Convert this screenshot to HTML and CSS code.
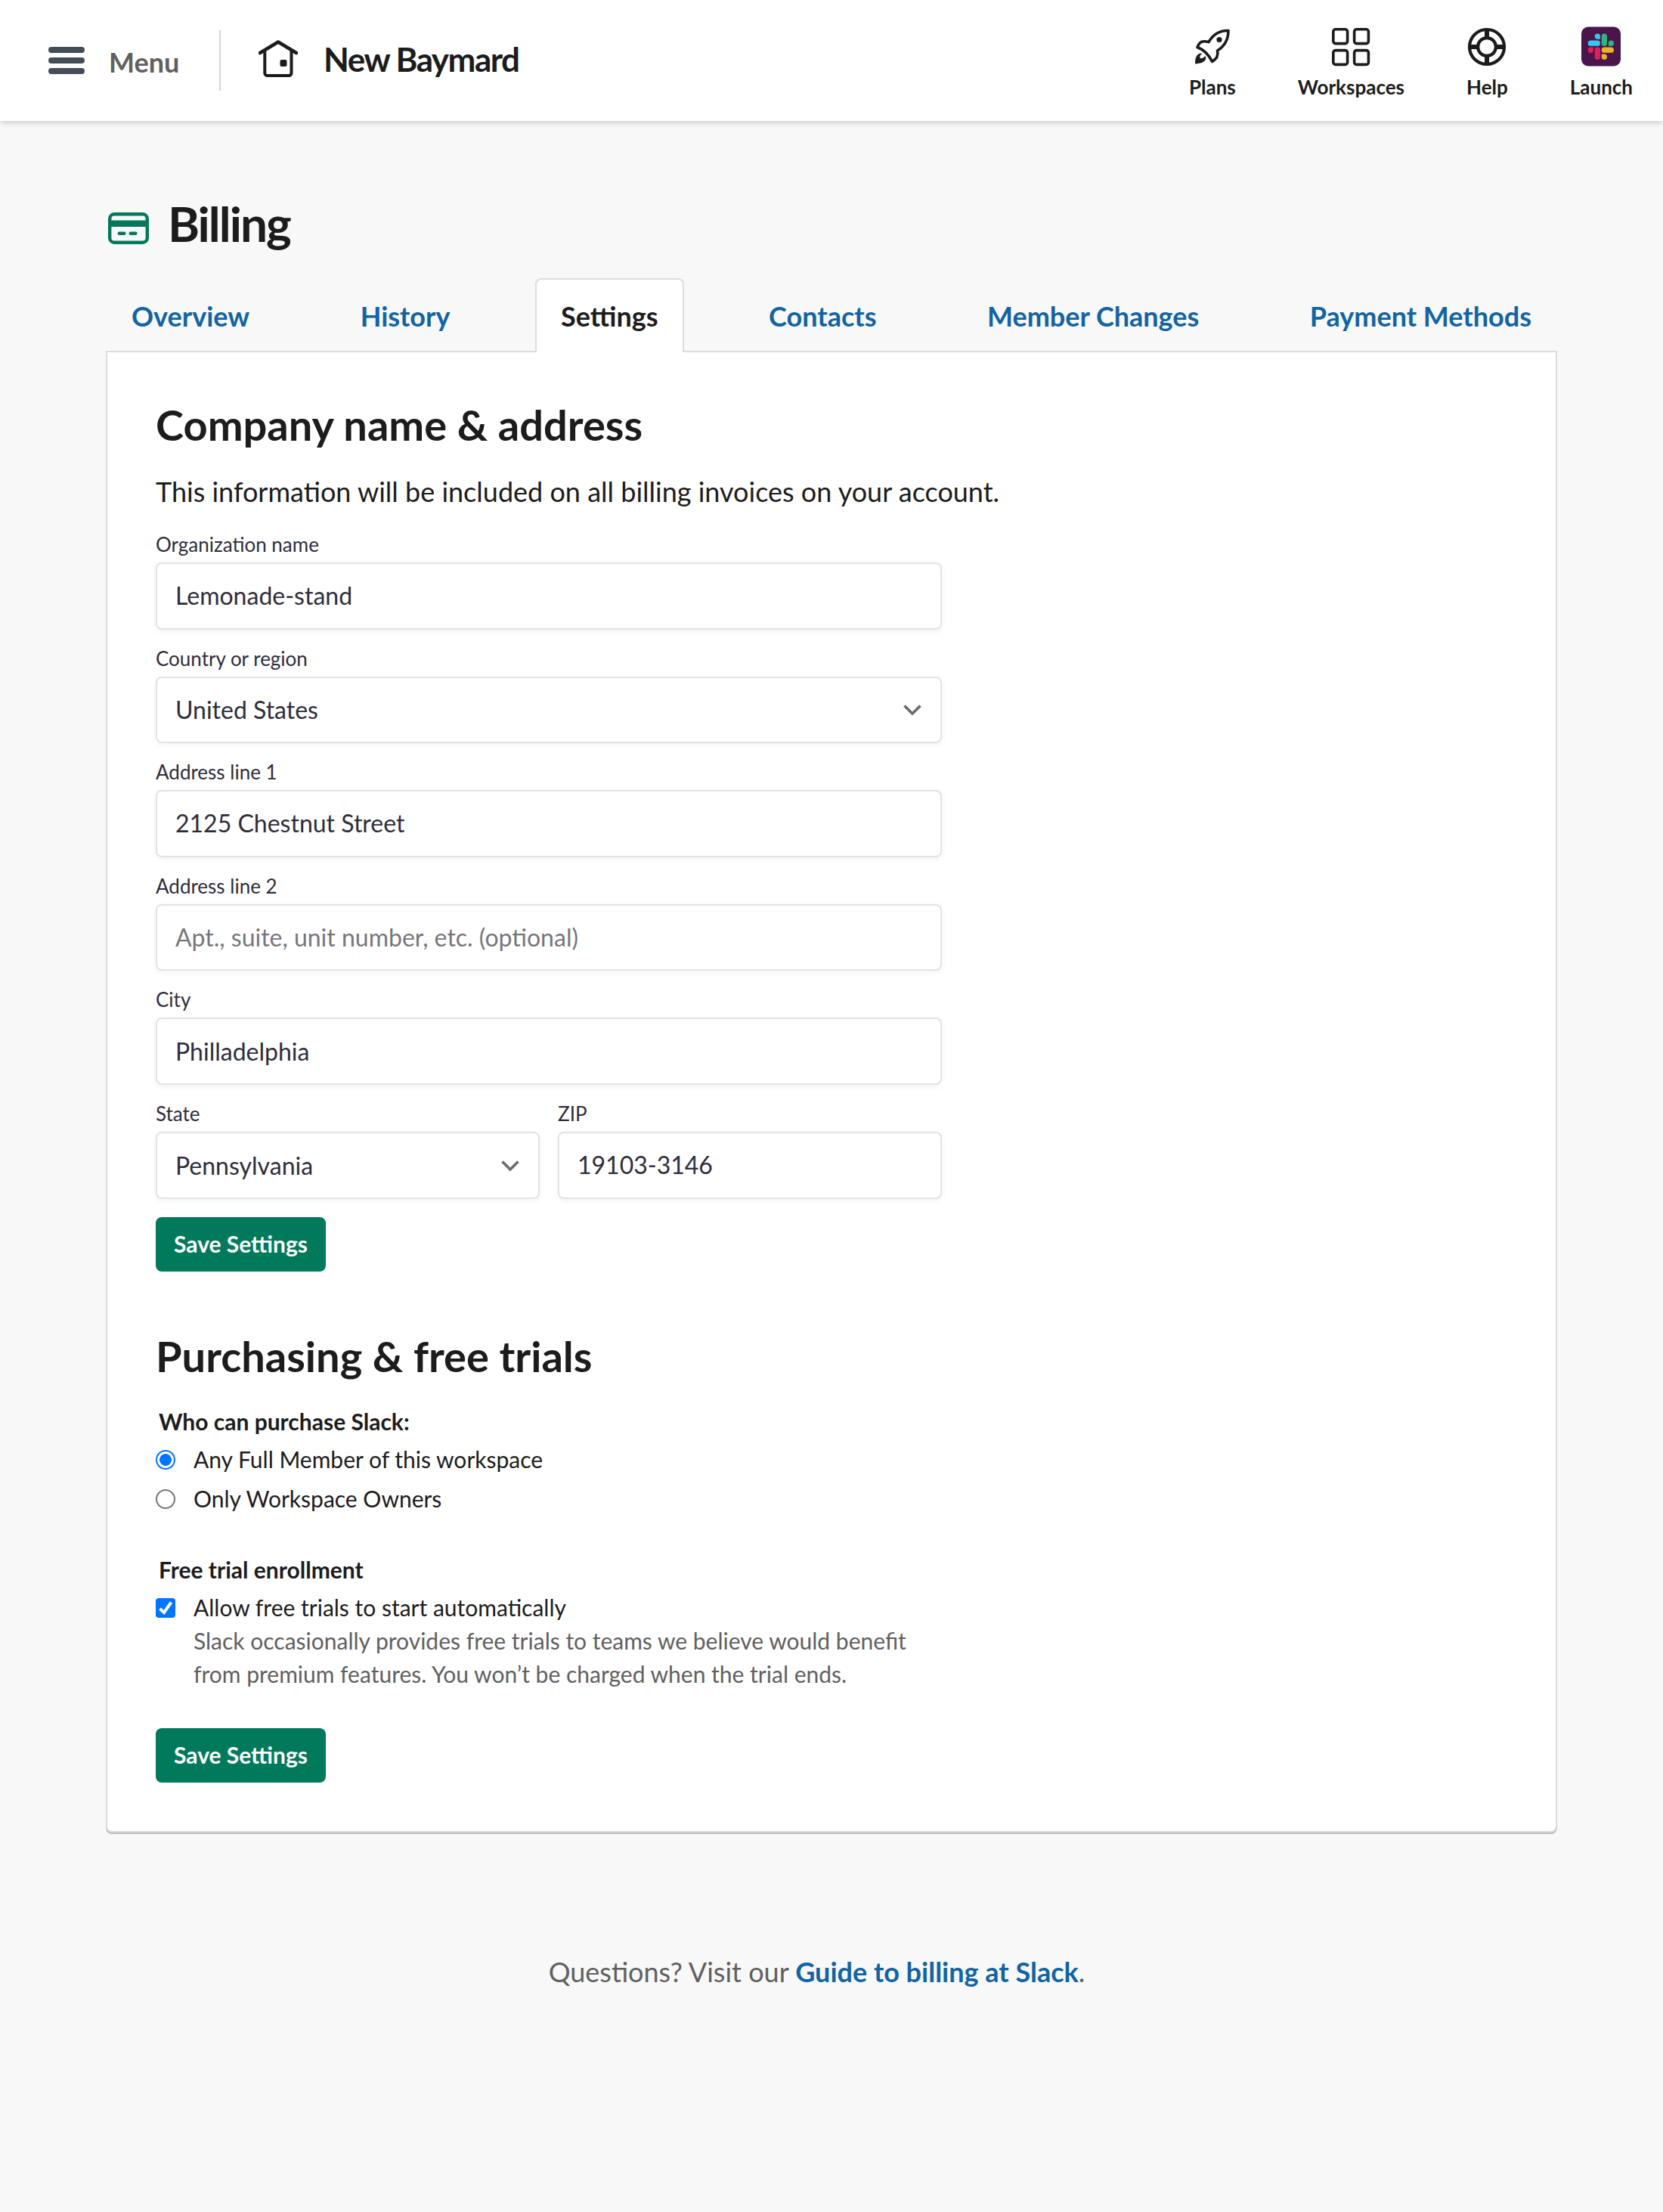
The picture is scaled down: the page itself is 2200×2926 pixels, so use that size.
FILE: index.html
```html
<!DOCTYPE html>
<html lang="en">

<head>
    <meta charset="UTF-8">
    <title>Billing | New Baymard</title>
    <link rel="stylesheet" href="styles.css">
</head>

<body>
    <header class="header">
        <a class="menu">
            <span class="menu-icon"><span></span><span></span><span></span></span>
            <span class="menu-text">Menu</span>
        </a>

        <a class="team">
            <svg class="team-icon" viewBox="0 0 52 50" fill="none" stroke="#1d1c1d" stroke-width="4" stroke-linecap="round" stroke-linejoin="round">
                <path d="M2 17 L26 2.5 L50 17" stroke-width="4.5"/>
                <path d="M8.3 14.5 V43.5 a3.5 3.5 0 0 0 3.5 3.5 H40 a3.5 3.5 0 0 0 3.5 -3.5 V14.5"/>
                <rect x="28.5" y="26" width="9" height="9" rx="2" fill="#1d1c1d" stroke="none"/>
            </svg>
            <span class="team-name">New Baymard</span>
        </a>

        <nav class="header-nav">
            <a class="nav-item">
                <svg class="nav-icon" viewBox="0 0 54 54" fill="none" stroke="#1d1c1d" stroke-width="3.6" stroke-linejoin="round">
                    <path d="M48 5.500 C37 5 28 10.500 22 20.500 C18 19.500 14.500 19.500 12 20.500 C9.500 22 8 24.500 7 27.500 C15 30.500 22 37 26.500 46.500 C29.500 44.500 32 42.500 33 40 C34 37 34 34.500 33.500 32 C43 26 48 16 48 5.500 Z"/>
                    <circle cx="36" cy="17.500" r="3.600" fill="#1d1c1d" stroke="none"/>
                    <path d="M10.500 35.500 C6 37 4 41 4 49.500 C12 49 17 47 18.500 42 L17.500 39 C15 42 12 43 10.500 41.500 C9.500 39.500 11 37.500 13.500 36 Z" fill="#1d1c1d" stroke="none"/>
                </svg>
                Plans
            </a>
            <a class="nav-item">
                <svg class="nav-icon" viewBox="0 0 54 54" fill="none" stroke="#1d1c1d" stroke-width="3.6">
                    <rect x="3.800" y="3.800" width="18.800" height="18.800" rx="3"/>
                    <rect x="31.600" y="3.800" width="18.800" height="18.800" rx="3"/>
                    <rect x="3.800" y="31.600" width="18.800" height="18.800" rx="3"/>
                    <rect x="31.600" y="31.600" width="18.800" height="18.800" rx="3"/>
                </svg>
                Workspaces
            </a>
            <a class="nav-item">
                <svg class="nav-icon" viewBox="0 0 54 54" fill="none" stroke="#1d1c1d" stroke-width="4.200">
                    <circle cx="27" cy="27" r="23"/>
                    <circle cx="27" cy="27" r="11.900"/>
                    <path d="M27 4 V15 M27 39 V50 M4 27 H15 M39 27 H50" stroke-width="6"/>
                </svg>
                Help
            </a>
            <a class="nav-item">
                <svg class="nav-icon" viewBox="0 0 54 54">
                    <rect x="1" y="0.500" width="52" height="52" rx="9" fill="#4a154b"/>
                    <g transform="translate(9.700 9.500) scale(0.2778)">
                        <path fill="#e01e5a" d="M26 78 a13 13 0 1 1 -13 -13 h13 z M32.500 78 a13 13 0 0 1 26 0 v32.500 a13 13 0 0 1 -26 0 z"/>
                        <path fill="#36c5f0" d="M45.500 26 a13 13 0 1 1 13 -13 v13 z M45.500 32.500 a13 13 0 0 1 0 26 H13 a13 13 0 0 1 0 -26 z"/>
                        <path fill="#2eb67d" d="M97.500 45.500 a13 13 0 1 1 13 13 h-13 z M91 45.500 a13 13 0 0 1 -26 0 V13 a13 13 0 0 1 26 0 z"/>
                        <path fill="#ecb22e" d="M78 97.500 a13 13 0 1 1 -13 13 v-13 z M78 91 a13 13 0 0 1 0 -26 h32.500 a13 13 0 0 1 0 26 z"/>
                    </g>
                </svg>
                Launch
            </a>
        </nav>
    </header>

    <main class="page">
        <h1 class="page-title">
            <svg class="billing-icon" viewBox="0 0 54 42">
                <rect x="2.200" y="2.200" width="49.600" height="37.600" rx="6" fill="none" stroke="#007a5a" stroke-width="4.400"/>
                <rect x="2" y="10.500" width="50" height="8.500" fill="#007a5a"/>
                <path d="M14.800 27.800 h6.500 M29.800 27.800 h6.500" stroke="#007a5a" stroke-width="4.600" stroke-linecap="round"/>
            </svg>
            Billing
        </h1>

        <nav class="tabs">
            <a class="tab">Overview</a>
            <a class="tab">History</a>
            <a class="tab tab-active">Settings</a>
            <a class="tab">Contacts</a>
            <a class="tab">Member Changes</a>
            <a class="tab">Payment Methods</a>
        </nav>

        <div class="panel">
            <h2 class="section-title">Company name &amp; address</h2>
            <p class="section-text">This information will be included on all billing invoices on your account.</p>

            <form class="form">
                <div class="field">
                    <label for="org">Organization name</label>
                    <input class="input" id="org" type="text" value="Lemonade-stand">
                </div>
                <div class="field">
                    <label>Country or region</label>
                    <div class="input select">
                        United States
                        <svg class="chevron" viewBox="0 0 26 16"><path d="M2.500 2.500 L13 13 L23.500 2.500"/></svg>
                    </div>
                </div>
                <div class="field">
                    <label for="line1">Address line 1</label>
                    <input class="input" id="line1" type="text" value="2125 Chestnut Street">
                </div>
                <div class="field">
                    <label for="line2">Address line 2</label>
                    <input class="input" id="line2" type="text" placeholder="Apt., suite, unit number, etc. (optional)">
                </div>
                <div class="field">
                    <label for="city">City</label>
                    <input class="input" id="city" type="text" value="Philladelphia">
                </div>
                <div class="field-row">
                    <div class="field">
                        <label>State</label>
                        <div class="input select">
                            Pennsylvania
                            <svg class="chevron" viewBox="0 0 26 16"><path d="M2.500 2.500 L13 13 L23.500 2.500"/></svg>
                        </div>
                    </div>
                    <div class="field">
                        <label for="zip">ZIP</label>
                        <input class="input" id="zip" type="text" value="19103-3146">
                    </div>
                </div>
            </form>
            <button class="button">Save Settings</button>

            <h2 class="section-title section-purchasing">Purchasing &amp; free trials</h2>

            <div class="options">
                <p class="options-title">Who can purchase Slack:</p>
                <label class="option"><input class="radio" type="radio" name="purchase" checked>Any Full Member of this workspace</label>
                <label class="option"><input class="radio" type="radio" name="purchase">Only Workspace Owners</label>
            </div>

            <div class="options">
                <p class="options-title">Free trial enrollment</p>
                <label class="option">
                    <span class="checkbox">
                        <svg viewBox="0 0 26 26" fill="none" stroke="#fff" stroke-width="4"><path d="M5.500 14 L11 19 L20.500 5.500"/></svg>
                    </span>
                    Allow free trials to start automatically
                </label>
                <p class="hint">Slack occasionally provides free trials to teams we believe would benefit from premium features. You won’t be charged when the trial ends.</p>
            </div>
            <button class="button">Save Settings</button>
        </div>
    </main>

    <footer class="footer">Questions? Visit our <a class="footer-link">Guide to billing at Slack</a>.</footer>
</body>

</html>
```
FILE: styles.css
```css
* {
    box-sizing: border-box;
}

body {
    margin: 0;
    min-height: 2926px;
    background-color: #f8f8f8;
    color: #1d1c1d;
    font-family: Lato, "Liberation Sans", sans-serif;
    font-size: 30px;
    line-height: 44px;
}

h1, h2, p {
    margin: 0;
}

svg {
    display: block;
}

/* Top bar */
.header {
    display: flex;
    align-items: center;
    height: 160px;
    padding-left: 64px;
    padding-right: 40px;
    background-color: #fff;
    box-shadow: 0 2px 8px rgba(0, 0, 0, 0.2);
}

.menu {
    display: flex;
    align-items: center;
    gap: 32px;
    width: 228px;
    height: 80px;
    border-right: 2px solid #d4d4d4;
}

.menu-icon {
    display: flex;
    flex-direction: column;
    gap: 6px;
}

.menu-icon span {
    width: 48px;
    height: 8px;
    border-radius: 4px;
    background-color: #434d58;
}

.menu-text {
    padding-top: 3px;
    color: #616061;
    font-size: 36px;
    font-weight: bold;
}

.team {
    display: flex;
    align-items: center;
    gap: 34px;
    padding-left: 50px;
    font-size: 44px;
    font-weight: bold;
    letter-spacing: -1.5px;
}

.team-icon {
    width: 52px;
    height: 50px;
    margin-top: -4px;
}

.team-name {
    margin-top: -5px;
}

.header-nav {
    display: flex;
    gap: 82px;
    margin-left: auto;
}

.nav-item {
    display: flex;
    flex-direction: column;
    align-items: center;
    gap: 10px;
    padding-top: 6px;
    font-size: 26px;
    font-weight: bold;
    line-height: 32px;
}

.nav-icon {
    width: 54px;
    height: 54px;
}

/* Page content */
.page {
    width: 1920px;
    margin: 0 auto;
    padding-top: 100px;
}

.page-title {
    display: flex;
    align-items: center;
    gap: 25px;
    height: 72px;
    margin-bottom: 36px;
    padding-left: 3px;
    font-size: 64px;
    line-height: 72px;
    letter-spacing: -2px;
}

.billing-icon {
    width: 54px;
    height: 42px;
    margin-top: 12px;
}

.tabs {
    display: flex;
    justify-content: space-between;
    margin-bottom: -2px;
}

.tab {
    padding: 24px 32px;
    border: 2px solid transparent;
    border-bottom: none;
    color: #1264a3;
    font-size: 36px;
    font-weight: bold;
    line-height: 48px;
}

/* Covers the top border of the panel */
.tab-active {
    position: relative;
    border-color: #ddd;
    border-radius: 8px 8px 0 0;
    background-color: #fff;
    color: #1d1c1d;
}

.panel {
    padding: 64px;
    border: 2px solid #ddd;
    border-radius: 0 0 8px 8px;
    background-color: #fff;
    box-shadow: 0 2px 0 #bbb;
}

.section-title {
    font-size: 56px;
    line-height: 64px;
}

.section-text {
    margin: 32px 0 28px;
    font-size: 36px;
    line-height: 48px;
}

/* Address form */
.form {
    display: flex;
    flex-direction: column;
    gap: 20px;
    width: 1040px;
    color: #2f2d3b;
}

.field {
    display: flex;
    flex-direction: column;
    flex: 1;
    gap: 6px;
}

.field label {
    font-size: 26px;
    line-height: 36px;
}

.field-row {
    display: flex;
    gap: 24px;
}

.input {
    width: 100%;
    height: 88.6px;
    padding: 0 24px 1px;
    border: 2px solid #e3e3e3;
    border-radius: 8px;
    background-color: #fff;
    box-shadow: 0 2px 8px rgba(0, 0, 0, 0.06);
    color: #2f2d3b;
    font-family: inherit;
    font-size: 32px;
}

.input::placeholder {
    color: #77767d;
}

.select {
    display: flex;
    align-items: center;
    justify-content: space-between;
    padding-top: 1px;
    padding-bottom: 0;
}

.chevron {
    width: 26px;
    height: 16px;
    fill: none;
    stroke: #6b6a76;
    stroke-width: 3.600;
}

.button {
    display: block;
    height: 72px;
    margin-top: 24px;
    padding: 0 24px 1px;
    border: none;
    border-radius: 8px;
    background-color: #007a5a;
    color: #fff;
    font-family: inherit;
    font-size: 30px;
    font-weight: bold;
}

/* Purchasing options */
.section-purchasing {
    margin-top: 80px;
    margin-bottom: 32px;
}

.options {
    width: 1040px;
    margin-bottom: 50px;
}

.options-title {
    padding-left: 4px;
    margin-bottom: 6px;
    font-weight: bold;
}

.option {
    display: flex;
    align-items: center;
    gap: 24px;
}

.option + .option {
    margin-top: 8px;
}

.radio {
    appearance: none;
    width: 26px;
    height: 26px;
    margin: 2px 0 0;
    border: 2px solid #767676;
    border-radius: 50%;
}

.radio:checked {
    border-color: #0075ff;
    background: radial-gradient(circle, #0075ff 7.500px, #fff 8.200px);
}

.checkbox {
    width: 26px;
    height: 26px;
    margin-top: 2px;
    border-radius: 4px;
    background-color: #0075ff;
}

.hint {
    padding-left: 50px;
    color: #616061;
}

.options + .button {
    margin-top: 0;
}

.footer {
    padding-top: 160px;
    padding-right: 39px;
    color: #616061;
    font-size: 36px;
    line-height: 48px;
    text-align: center;
}

.footer-link {
    color: #1264a3;
    font-weight: bold;
}
```
